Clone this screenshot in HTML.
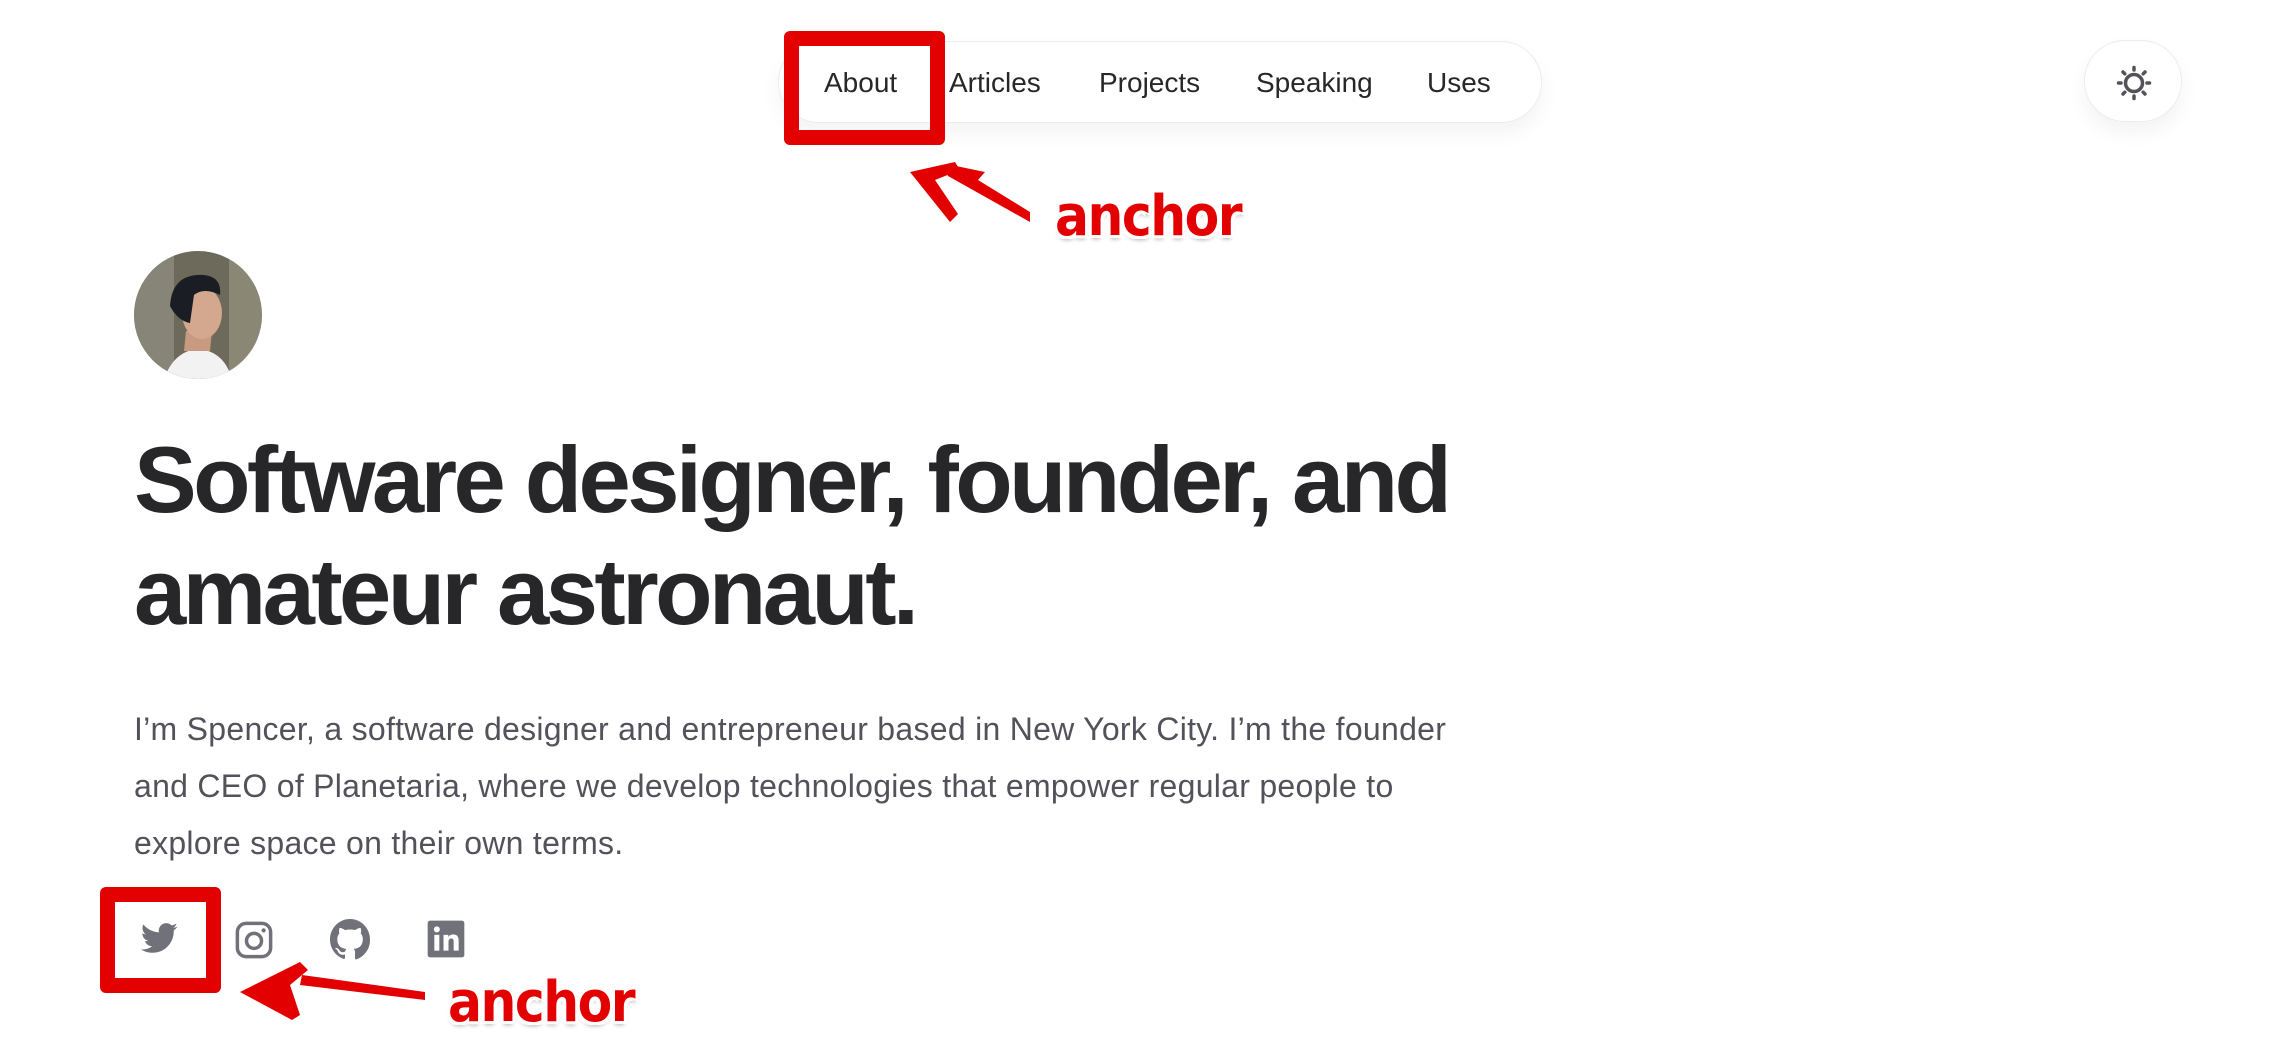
<!DOCTYPE html>
<html><head><meta charset="utf-8"><style>
html,body{margin:0;padding:0;background:#fff;width:2292px;height:1064px;overflow:hidden;position:relative;font-family:"Liberation Sans",sans-serif;}
.nav{position:absolute;left:778px;top:41px;width:764px;height:82px;border-radius:41px;border:1.5px solid #ececec;box-shadow:0 10px 20px rgba(0,0,0,0.05);box-sizing:border-box;}
.nav span{position:absolute;top:25px;font-size:28px;color:#27272a;}
.theme{position:absolute;left:2084px;top:40px;width:98px;height:82px;border-radius:41px;border:1.5px solid #ececec;box-shadow:0 10px 20px rgba(0,0,0,0.05);box-sizing:border-box;}
.avatar{position:absolute;left:134px;top:251px;width:128px;height:128px;border-radius:50%;overflow:hidden;}
h1{position:absolute;left:134px;top:424px;margin:0;font-size:94px;line-height:112px;font-weight:bold;color:#27272a;letter-spacing:-3.6px;width:1500px;}
p{position:absolute;left:134px;top:701px;margin:0;font-size:32px;line-height:57px;color:#52525b;width:1500px;letter-spacing:0.28px;}
.redbox{position:absolute;border:15px solid #e30000;border-radius:6px;box-sizing:border-box;}
.anchor{position:absolute;font-weight:bold;color:#e30000;font-size:56px;text-shadow:-3px -3px 0 #fff,3px -3px 0 #fff,-3px 3px 0 #fff,3px 3px 0 #fff,0 4px 4px rgba(0,0,0,.3);font-family:"DejaVu Sans Condensed","DejaVu Sans","Liberation Sans",sans-serif;letter-spacing:-1.5px;}
svg.ic{position:absolute;}
</style></head><body>
<div class="nav">
<span style="left:45px">About</span>
<span style="left:170px">Articles</span>
<span style="left:320px">Projects</span>
<span style="left:477px">Speaking</span>
<span style="left:648px">Uses</span>
</div>
<div class="theme"><svg width="98" height="82" viewBox="0 0 98 82"><g stroke="#52525b" stroke-width="3.5" stroke-linecap="round" fill="none"><circle cx="49" cy="42" r="8.5"/><path d="M49 26.5v2.5M49 55v2.5M33.5 42h2.5M62 42h2.5M38 31l1.8 1.8M58.2 51.2L60 53M38 53l1.8-1.8M58.2 32.8L60 31"/></g></svg></div>
<div class="avatar"><svg width="128" height="128" viewBox="0 0 128 128"><rect width="128" height="128" fill="#6d6a5c"/><rect x="0" y="0" width="40" height="128" fill="#9a9888" opacity=".6"/><rect x="95" y="0" width="33" height="128" fill="#a8a58c" opacity=".5"/><path d="M30 128 Q40 100 64 98 Q90 100 98 128Z" fill="#f2f2f2"/><path d="M50 100 L52 80 L78 80 L76 100Z" fill="#c89a80"/><ellipse cx="68" cy="62" rx="20" ry="26" fill="#d4a88e"/><path d="M36 55 Q38 22 70 24 Q88 26 86 44 Q70 36 60 44 L56 72 Q44 70 36 55Z" fill="#1a1d24"/></svg></div>
<h1>Software designer, founder, and<br>amateur astronaut.</h1>
<p>I’m Spencer, a software designer and entrepreneur based in New York City. I’m the founder<br>and CEO of Planetaria, where we develop technologies that empower regular people to<br>explore space on their own terms.</p>
<svg class="ic" style="left:136px;top:917px" width="46" height="44" viewBox="0 0 24 24"><path fill="#71717a" d="M20.06 7.3c.01.18.01.35.01.53 0 5.42-4.13 11.67-11.67 11.670-2.32 0-4.48-.68-6.3-1.85.32.04.65.05.99.05 1.92 0 3.69-.65 5.1-1.75-1.8-.03-3.31-1.22-3.83-2.85.25.05.51.07.77.07.38 0 .74-.05 1.08-.14-1.88-.38-3.29-2.03-3.29-4.02v-.05c.55.31 1.19.5 1.86.52A4.1 4.1 0 0 1 3.51 4.1c2.02 2.48 5.05 4.1 8.45 4.27a4.1 4.1 0 0 1 6.99-3.74 8.1 8.1 0 0 0 2.6-.99 4.1 4.1 0 0 1-1.8 2.27 8.2 8.2 0 0 0 2.36-.65 8.8 8.8 0 0 1-2.05 2.04z"/></svg>
<svg class="ic" style="left:233px;top:919px" width="42" height="42" viewBox="0 0 24 24"><rect x="2.5" y="2.5" width="19" height="19" rx="5" fill="none" stroke="#71717a" stroke-width="2"/><circle cx="12" cy="12.5" r="4.3" fill="none" stroke="#71717a" stroke-width="2"/><circle cx="17.5" cy="6.5" r="1.2" fill="#71717a"/></svg>
<svg class="ic" style="left:326px;top:914px" width="48" height="50" viewBox="0 0 24 24"><path fill="#71717a" d="M12 2C6.48 2 2 6.58 2 12.23c0 4.52 2.87 8.35 6.84 9.7.5.1.68-.22.68-.49v-1.7c-2.78.62-3.37-1.2-3.37-1.2-.46-1.18-1.11-1.5-1.11-1.5-.91-.63.07-.62.07-.62 1 .07 1.53 1.06 1.53 1.06.9 1.56 2.35 1.1 2.92.85.09-.66.35-1.1.64-1.36-2.22-.26-4.55-1.13-4.55-5.02 0-1.11.39-2.02 1.03-2.73-.1-.26-.45-1.3.1-2.7 0 0 .84-.27 2.75 1.05a9.4 9.4 0 0 1 5 0c1.91-1.32 2.75-1.05 2.75-1.05.55 1.4.2 2.44.1 2.7.64.71 1.03 1.62 1.03 2.73 0 3.9-2.34 4.76-4.57 5.01.36.32.68.94.68 1.9v2.82c0 .27.18.6.69.49A10.2 10.2 0 0 0 22 12.23C22 6.58 17.52 2 12 2z"/></svg>
<svg class="ic" style="left:426px;top:919px" width="40" height="40" viewBox="0 0 24 24"><rect x="1" y="1" width="22" height="22" rx="1.5" fill="#71717a"/><rect x="5" y="9.5" width="3" height="9.5" fill="#fff"/><circle cx="6.5" cy="6.2" r="1.8" fill="#fff"/><path fill="#fff" d="M10.5 9.5h2.9v1.3c.5-.9 1.6-1.5 3-1.5 2.5 0 3.2 1.5 3.2 3.8V19h-3v-5.3c0-1.2-.3-2-1.4-2-1.2 0-1.7.9-1.7 2V19h-3z"/></svg>
<div class="redbox" style="left:784px;top:31px;width:161px;height:114px"></div>
<div class="redbox" style="left:100px;top:887px;width:121px;height:106px"></div>
<svg class="ic" style="left:0;top:0" width="2292" height="1064"><g fill="#e30000"><path d="M1030 222 L948 176 L944 168 L956 166 L985 172 L978 180 L1030 212Z"/><path d="M910 172 L955 162 L960 170 L935 180 L958 214 L950 222Z"/><path d="M425 1000 L300 985 L302 975 L425 992Z"/><path d="M240 992 L300 962 L308 970 L290 985 L300 1015 L292 1020Z"/></g></svg>
<div class="anchor" style="left:1055px;top:184px">anchor</div>
<div class="anchor" style="left:448px;top:970px">anchor</div>
</body></html>
